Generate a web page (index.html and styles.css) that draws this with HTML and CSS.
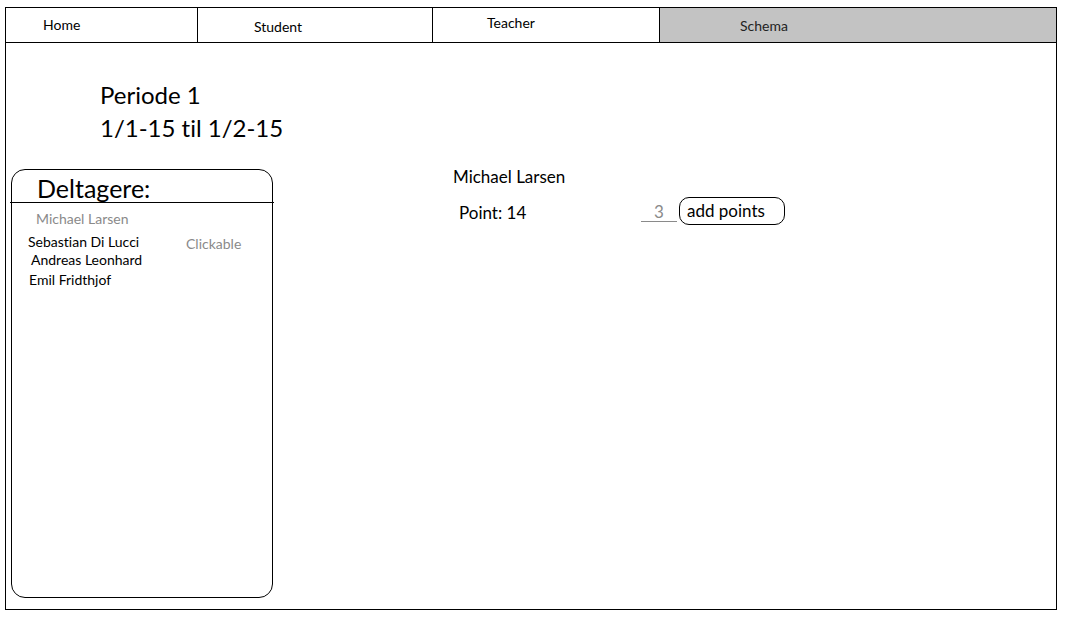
FILE: index.html
```html
<!DOCTYPE html>
<html>
<head>
<meta charset="utf-8">
<link rel="stylesheet" href="styles.css">
</head>
<body>
<div class="frame">
  <nav class="tabs">
    <div class="tab tab-home">Home</div>
    <div class="tab tab-student">Student</div>
    <div class="tab tab-teacher">Teacher</div>
    <div class="tab tab-schema">Schema</div>
  </nav>
  <main class="content">
    <div class="period">
      <div>Periode 1</div>
      <div>1/1-15 til 1/2-15</div>
    </div>
    <div class="row">
      <section class="panel">
        <div class="panel-head">Deltagere:</div>
        <div class="list">
          <div class="item item-muted">Michael Larsen</div>
          <div class="item-line">
            <span class="item item-sebastian">Sebastian Di Lucci</span>
            <span class="note">Clickable</span>
          </div>
          <div class="item item-andreas">Andreas Leonhard</div>
          <div class="item item-emil">Emil Fridthjof</div>
        </div>
      </section>
      <section class="detail">
        <div class="detail-name">Michael Larsen</div>
        <div class="detail-row">
          <span class="points">Point: 14</span>
          <span class="amount">3</span>
          <span class="add-btn">add points</span>
        </div>
      </section>
    </div>
  </main>
</div>
</body>
</html>
```
FILE: styles.css
```css
html, body {
  margin: 0;
  padding: 0;
  background: #fff;
}
body {
  font-family: Lato, "Open Sans", sans-serif;
  font-variant-ligatures: none;
  color: #000;
}
.frame {
  margin: 7px 0 0 5px;
  width: 1050px;
  height: 601px;
  border: 1px solid #000;
  display: flex;
  flex-direction: column;
}
.tabs {
  display: flex;
  height: 34px;
  border-bottom: 1px solid #000;
  font-size: 14px;
}
.tab {
  box-sizing: border-box;
  border-right: 1px solid #000;
}
.tab-home {
  width: 192px;
  padding: 8px 0 0 37px;
}
.tab-student {
  width: 235px;
  padding: 10px 0 0 56px;
}
.tab-teacher {
  width: 227px;
  padding: 6px 0 0 54px;
}
.tab-schema {
  flex: 1;
  border-right: none;
  background: #c3c3c3;
  padding: 9px 0 0 80px;
  color: #222;
}
.content {
  flex: 1;
  display: flex;
  flex-direction: column;
}
.period {
  margin: 35px 0 0 94px;
  font-size: 24px;
  line-height: 33px;
}
.row {
  display: flex;
  margin-top: 25px;
}
.panel {
  margin-left: 5px;
  width: 260px;
  height: 427px;
  border: 1px solid #000;
  border-radius: 14px;
}
.panel-head {
  margin: 0 -2px;
  padding: 4px 0 0 27px;
  height: 28px;
  border-bottom: 1px solid #000;
  font-size: 25px;
  line-height: 28px;
}
.list {
  font-size: 14px;
  padding-top: 7px;
}
.item {
  display: block;
}
.item-muted {
  color: #8a8a8a;
  padding-left: 24px;
}
.item-line {
  display: flex;
  margin-top: 6px;
}
.item-sebastian {
  padding-left: 16px;
  width: 158px;
}
.note {
  color: #8a8a8a;
  padding-top: 2px;
}
.item-andreas {
  padding-left: 19px;
  margin-top: -1px;
}
.item-emil {
  padding-left: 17px;
  margin-top: 3px;
}
.detail {
  margin-left: 180px;
  font-size: 17px;
}
.detail-name {
  margin-top: -3px;
}
.detail-row {
  display: flex;
  align-items: center;
  margin-top: 13px;
}
.points {
  padding-left: 6px;
  width: 182px;
}
.amount {
  width: 36px;
  box-sizing: border-box;
  text-align: center;
  color: #8a8a8a;
  border-bottom: 1px solid #8a8a8a;
  margin-top: 0;
  line-height: 18px;
}
.add-btn {
  margin-left: 2px;
  padding: 2px 8px 3px 7px;
  width: 89px;
  border: 1px solid #000;
  border-radius: 10px;
  margin-top: -3px;
}
```
